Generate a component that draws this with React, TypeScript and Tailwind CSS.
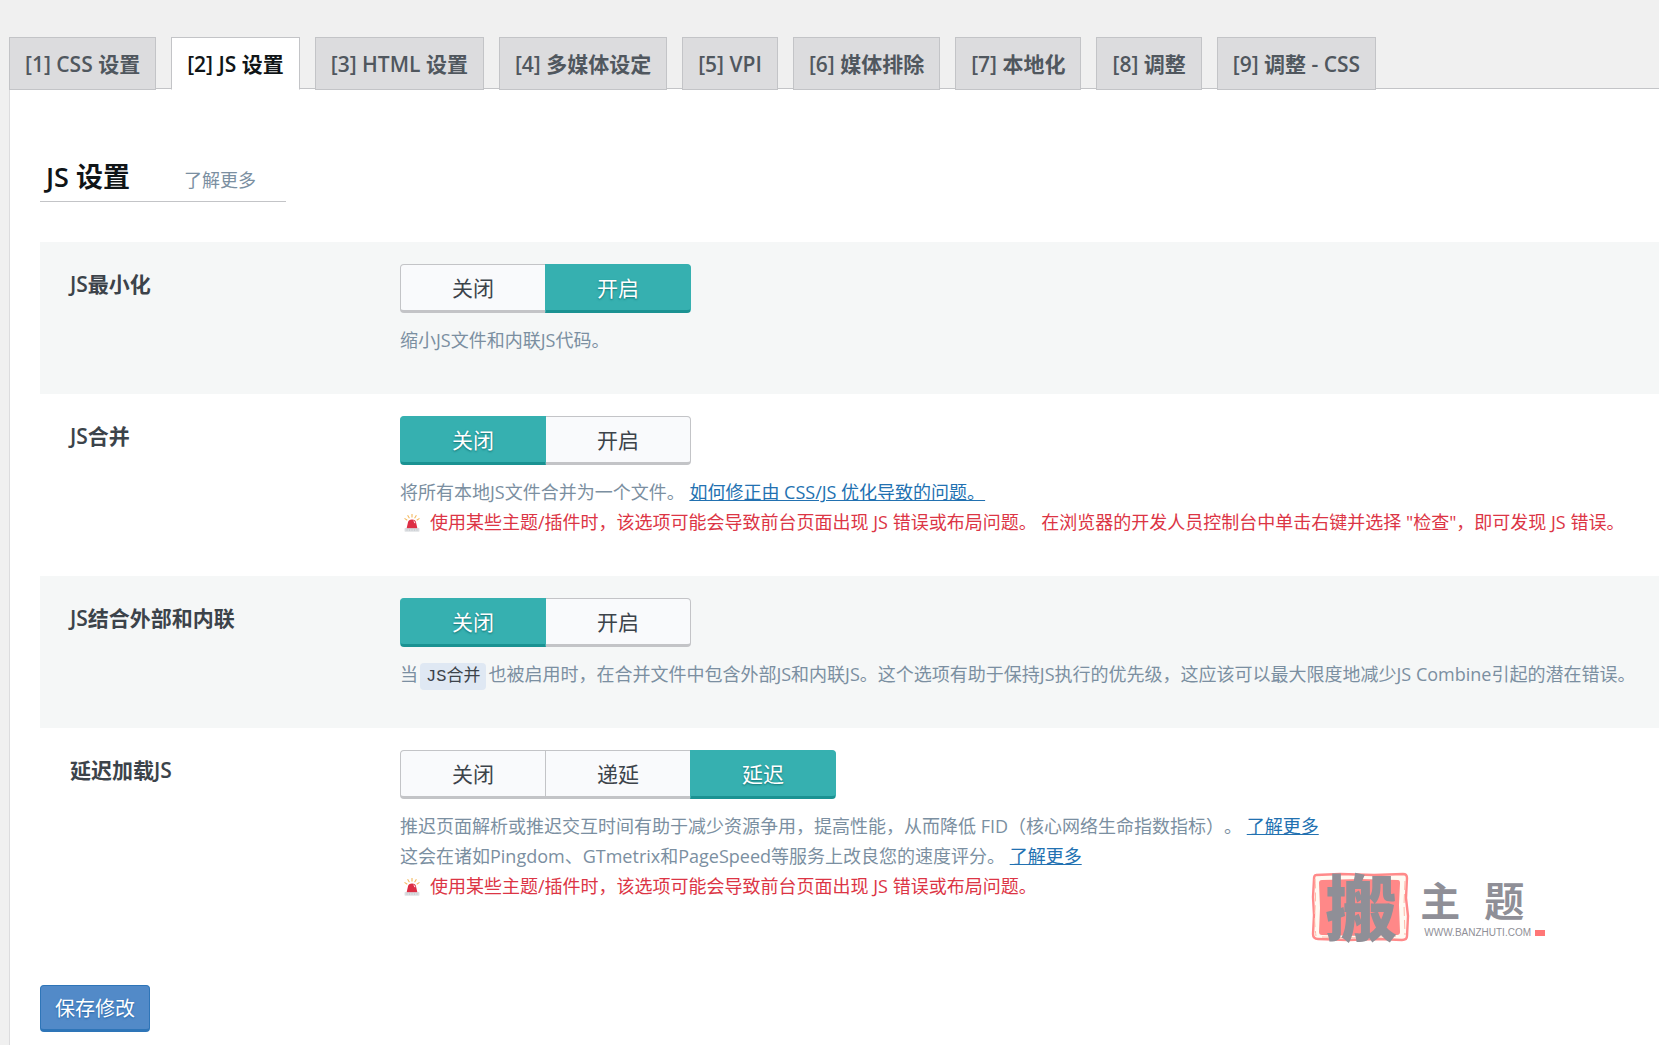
import { useState } from 'react';
import type { ReactNode } from 'react';
import clsx from 'clsx';

const tabs = [
  '[1] CSS 设置',
  '[2] JS 设置',
  '[3] HTML 设置',
  '[4] 多媒体设定',
  '[5] VPI',
  '[6] 媒体排除',
  '[7] 本地化',
  '[8] 调整',
  '[9] 调整 - CSS'
];

function Siren() {
  return (
    <svg viewBox="0 0 16 18" className="mr-[10px] ml-1 inline-block h-[18px] w-4 align-[-3px]" aria-hidden="true">
      <path d="M8 0v3.6M3.6 1.2l1.8 3M12.4 1.2l-1.8 3M.5 4.4l2.8 1.8M15.5 4.4l-2.8 1.8" stroke="#f3b95f" strokeWidth="1.1" fill="none" />
      <path d="M2.6 14.5 4 8.2Q4.5 5.4 8 5.4t4 2.8l1.4 6.3z" fill="#dd2e44" />
      <path d="M9.5 7q1.4.5 1.4 2.2" stroke="#fff" strokeWidth="1" fill="none" />
      <path d="M.7 14.3h14.6v3.2H.7z" fill="#ccd0d4" />
      <path d="M1 16h14" stroke="#e9ebed" strokeWidth="1" strokeDasharray="1.5 1" />
    </svg>
  );
}

function Warning({ children }: { children: ReactNode }) {
  return (
    <p className="text-[#dc3545]">
      <Siren />
      {children}
    </p>
  );
}

function Link({ children }: { children: ReactNode }) {
  return (
    <a href="#" className="text-[#2271b1] underline">
      {children}
    </a>
  );
}

function Toggle({ name, options, initial }: { name: string; options: string[]; initial: string }) {
  const [value, setValue] = useState(initial);

  return (
    <fieldset className="flex" aria-label={name}>
      {options.map((option) => (
        <label
          key={option}
          className={clsx(
            'relative -ml-px flex h-[49px] w-[146px] cursor-pointer items-center justify-center border border-b-3 pt-[2px] text-[21px] first-of-type:ml-0 first-of-type:rounded-l last-of-type:rounded-r',
            value === option
              ? 'z-10 border-[#36b0b0] border-b-[#1a9292] bg-[#36b0b0] text-white text-shadow-[0_1px_2px_#117171]'
              : 'border-[#c3c4c7] bg-[#f9fafc] text-[#3c434a]'
          )}
        >
          <input
            type="radio"
            name={name}
            value={option}
            checked={value === option}
            onChange={() => setValue(option)}
            className="sr-only"
          />
          {option}
        </label>
      ))}
    </fieldset>
  );
}

interface RowProps {
  label: string;
  options: string[];
  initial: string;
  children: ReactNode;
}

function Row({ label, options, initial, children }: RowProps) {
  return (
    <div className="flex pt-[22px] pb-[39px] pl-[30px] odd:bg-[#f5f7f7]">
      <h3 className="w-[330px] shrink-0 pt-1 text-[21px] leading-8 font-semibold text-[#3c434a]">{label}</h3>
      <div className="min-w-0 flex-1">
        <Toggle name={label} options={options} initial={initial} />
        <div className="mt-3 text-[18px] leading-[30px] text-[#7b8fa1]">{children}</div>
      </div>
    </div>
  );
}

function Watermark() {
  return (
    <div className="pointer-events-none absolute right-[114px] bottom-[102px] flex h-[72px] gap-1 text-[#8f8f97]">
      <div className="relative flex w-[102px] items-center justify-center">
        <svg viewBox="0 0 102 72" className="absolute inset-0 h-full w-full" aria-hidden="true">
          <path
            d="M6 4 30 3l34 1 29-1q4 0 4 4l-1 20 2 18-1 20q0 4-5 4l-24-1-30 1-30-1q-5 0-5-5l1-19-1-18 1-18q0-4 2-4z"
            fill="#fffaf2"
            stroke="#ff8a8a"
            strokeWidth="2.4"
            strokeLinejoin="round"
          />
          <path d="M5 8q1 16 0 30t1 27M12 66l40 1 38-2M95 10l-1 24 1 30" fill="none" stroke="#ffb9a8" strokeWidth="1" strokeDasharray="9 4" />
          <path d="M12 9 50 8l38 1q2 0 2 3l-1 22 1 27q0 3-3 3l-34 1-41-1q-3 0-3-3l1-24-1-25q0-3 3-3z" fill="#ff8888" />
        </svg>
        <span className="relative text-[72px] leading-[72px] font-black">搬</span>
      </div>
      <div className="flex flex-col justify-between pt-2 pb-1">
        <span className="flex gap-6 pl-1 text-[40px] leading-[44px] font-bold">
          <span>主</span>
          <span>题</span>
        </span>
        <span className="flex items-center gap-1 pl-2 font-['Liberation_Sans'] text-[10px] leading-3">
          WWW.BANZHUTI.COM
          <span className="h-[6px] w-[10px] bg-[#ff7777]" />
        </span>
      </div>
    </div>
  );
}

export default function App() {
  const [active, setActive] = useState(1);

  return (
    <div className="min-h-screen bg-[#f0f0f0] pt-[37px] pl-[9px] font-['Open_Sans','Noto_Sans_CJK_SC',sans-serif] [text-spacing-trim:space-all]">
      <nav className="flex gap-[15px] border-b border-[#c3c4c7]">
        {tabs.map((tab, index) => (
          <button
            key={tab}
            type="button"
            onClick={() => setActive(index)}
            className={clsx(
              'relative z-10 -mb-[2px] h-[53px] border px-[15px] pt-[2px] text-[21px] font-semibold whitespace-nowrap',
              index === active
                ? 'border-[#c3c4c7] border-b-white bg-white text-[#101517]'
                : 'border-[#c3c4c7] bg-[#dcdcde] text-[#50575e]'
            )}
          >
            {tab}
          </button>
        ))}
      </nav>

      <main className="relative border-l border-[#dcdcde] bg-white pt-[67px] pb-[13px] pl-[30px]">
        <div className="inline-flex items-baseline gap-[54px] border-b border-[#c3c4c7] pr-[30px] pb-1 pl-[6px]">
          <h2 className="text-[27px] leading-[41px] font-semibold text-[#101517]">JS 设置</h2>
          <a href="#" className="text-[18px] text-[#7b8fa1]">了解更多</a>
        </div>

        <form className="mt-10" onSubmit={(e) => e.preventDefault()}>
          <div>
            <Row label="JS最小化" options={['关闭', '开启']} initial="开启">
              <p>缩小JS文件和内联JS代码。</p>
            </Row>
            <Row label="JS合并" options={['关闭', '开启']} initial="关闭">
              <p>
                将所有本地JS文件合并为一个文件。 <Link>如何修正由 CSS/JS 优化导致的问题。</Link>
              </p>
              <Warning>
                使用某些主题/插件时，该选项可能会导致前台页面出现 JS 错误或布局问题。 在浏览器的开发人员控制台中单击右键并选择 "检查"，即可发现 JS 错误。
              </Warning>
            </Row>
            <Row label="JS结合外部和内联" options={['关闭', '开启']} initial="关闭">
              <p>
                当<code className="mx-[2px] rounded bg-[#dfe8f3] px-[6px] py-1 font-['Liberation_Mono','Noto_Sans_CJK_SC',monospace] text-[17px] leading-5 text-[#3c434a]">JS合并</code>也被启用时，在合并文件中包含外部JS和内联JS。这个选项有助于保持JS执行的优先级，这应该可以最大限度地减少JS Combine引起的潜在错误。
              </p>
            </Row>
            <Row label="延迟加载JS" options={['关闭', '递延', '延迟']} initial="延迟">
              <p>
                推迟页面解析或推迟交互时间有助于减少资源争用，提高性能，从而降低 FID（核心网络生命指数指标）。 <Link>了解更多</Link>
              </p>
              <p>
                这会在诸如Pingdom、GTmetrix和PageSpeed等服务上改良您的速度评分。 <Link>了解更多</Link>
              </p>
              <Warning>使用某些主题/插件时，该选项可能会导致前台页面出现 JS 错误或布局问题。</Warning>
            </Row>
          </div>

          <button
            type="submit"
            className="mt-[45px] h-[47px] rounded border border-b-3 border-[#2e75b8] bg-[#528ac8] px-[14px] pt-[2px] text-[20px] text-white text-shadow-[0_1px_2px_#1f62a5]"
          >
            保存修改
          </button>
        </form>

        <Watermark />
      </main>
    </div>
  );
}
